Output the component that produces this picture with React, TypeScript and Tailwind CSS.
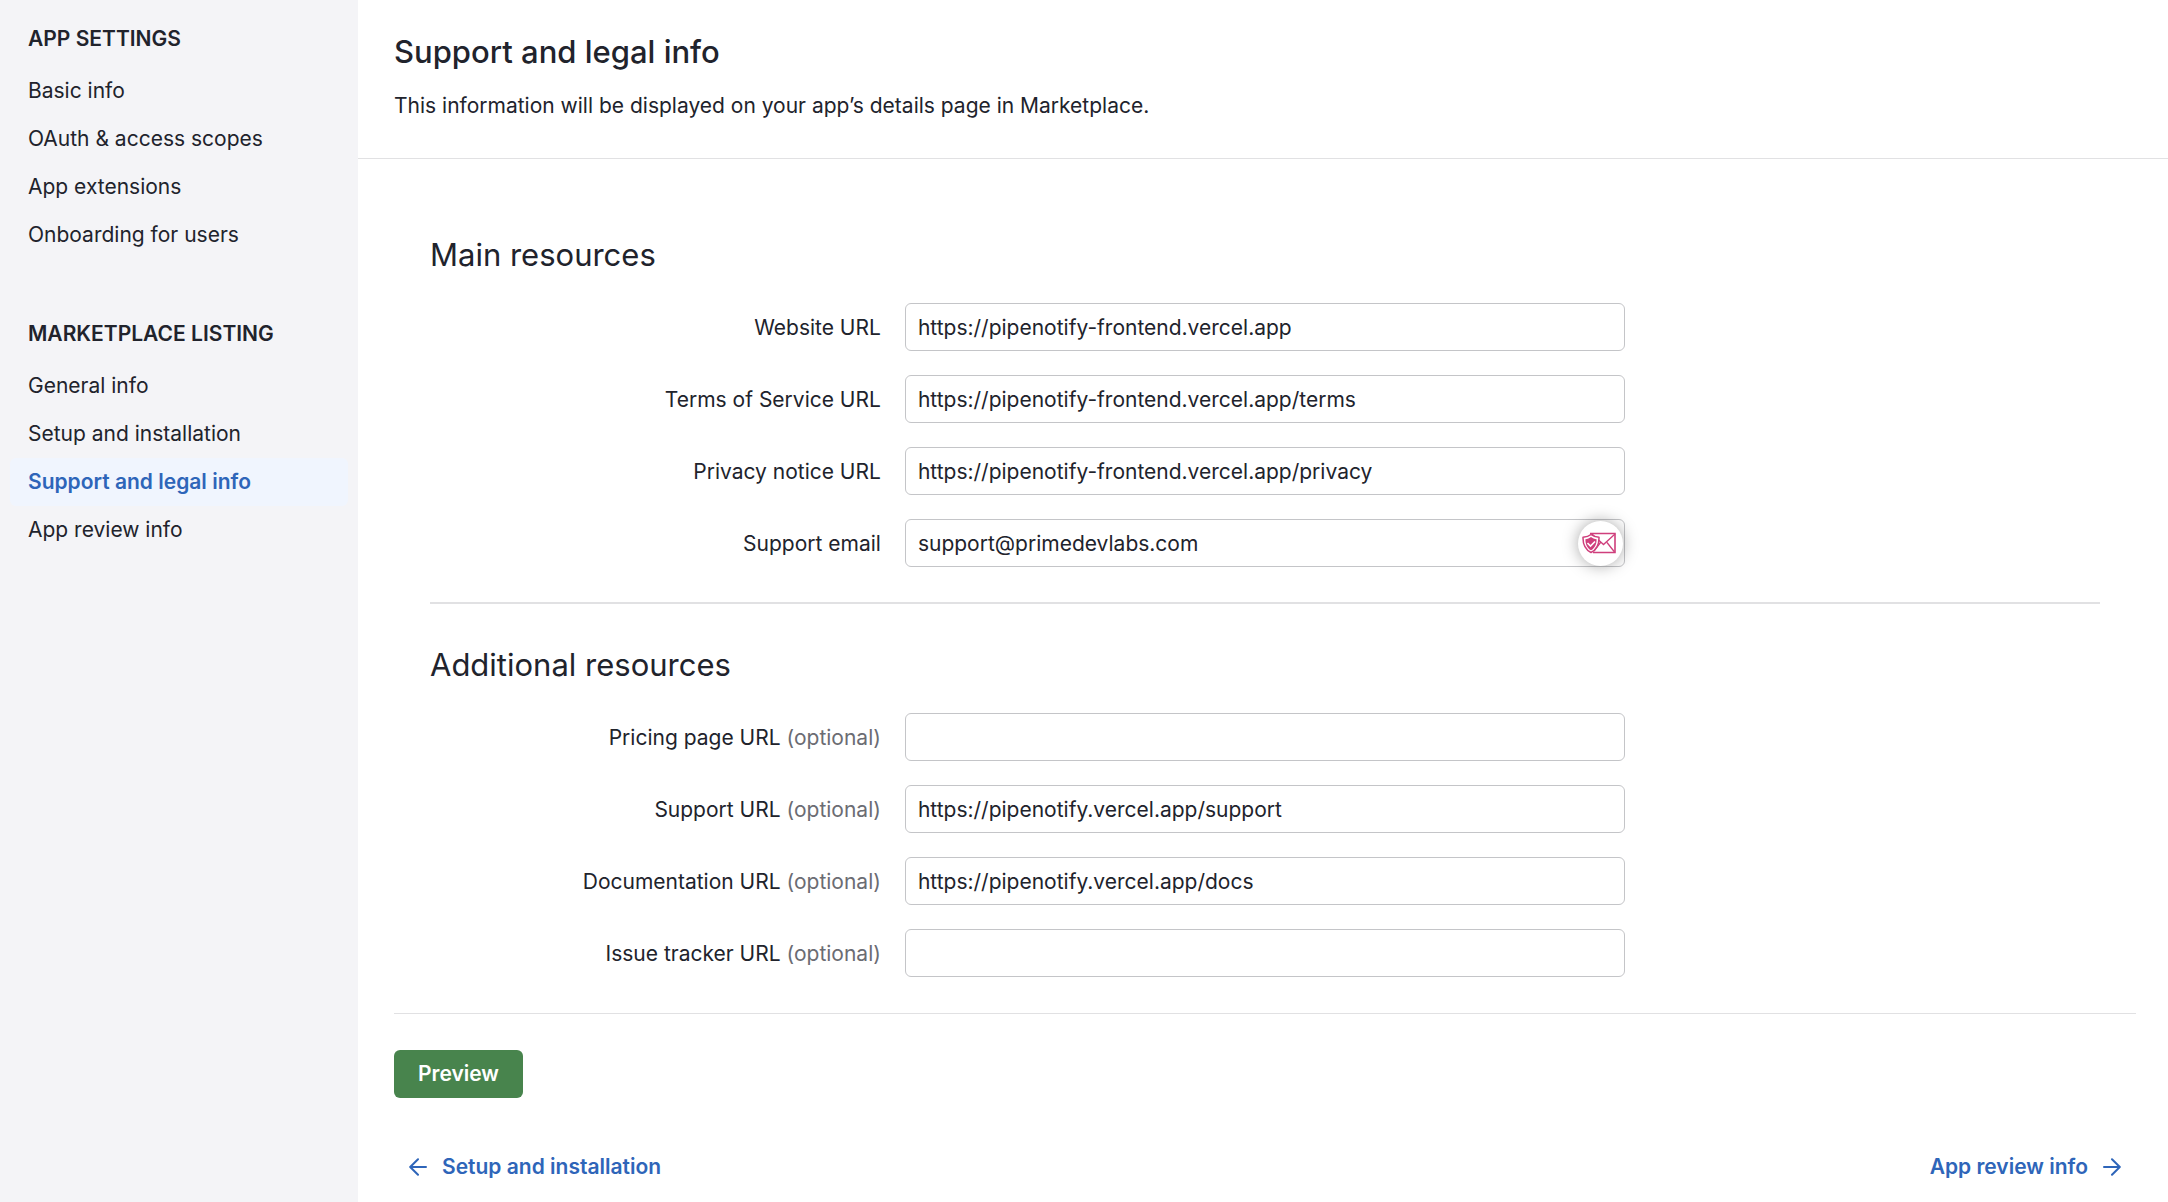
import { useId } from "react";

type NavItem = { label: string; active?: boolean };
type FieldData = { label: string; value: string; optional?: boolean; type?: string; badge?: boolean };

const appSettings: NavItem[] = [
  { label: "Basic info" },
  { label: "OAuth & access scopes" },
  { label: "App extensions" },
  { label: "Onboarding for users" },
];

const marketplaceListing: NavItem[] = [
  { label: "General info" },
  { label: "Setup and installation" },
  { label: "Support and legal info", active: true },
  { label: "App review info" },
];

const mainResources: FieldData[] = [
  { label: "Website URL", value: "https://pipenotify-frontend.vercel.app" },
  { label: "Terms of Service URL", value: "https://pipenotify-frontend.vercel.app/terms" },
  { label: "Privacy notice URL", value: "https://pipenotify-frontend.vercel.app/privacy" },
  { label: "Support email", value: "support@primedevlabs.com", type: "email", badge: true },
];

const additionalResources: FieldData[] = [
  { label: "Pricing page URL", value: "", optional: true },
  { label: "Support URL", value: "https://pipenotify.vercel.app/support", optional: true },
  { label: "Documentation URL", value: "https://pipenotify.vercel.app/docs", optional: true },
  { label: "Issue tracker URL", value: "", optional: true },
];

function NavGroup({ title, items }: { title: string; items: NavItem[] }) {
  return (
    <section>
      <h2 className="px-[18px] pb-1 font-semibold leading-12">{title}</h2>
      <ul>
        {items.map((item) => (
          <li key={item.label}>
            <a
              href="#"
              aria-current={item.active ? "page" : undefined}
              className={
                item.active
                  ? "block rounded-md bg-[#f0f5fe] px-[18px] font-semibold leading-12 text-[#2e65b9]"
                  : "block rounded-md px-[18px] leading-12"
              }
            >
              {item.label}
            </a>
          </li>
        ))}
      </ul>
    </section>
  );
}

function MailShieldIcon() {
  return (
    <svg viewBox="0 0 34 22" className="h-[22px] w-[34px]" fill="none" aria-hidden="true">
      <path d="M8 1.500H33V20.500H11" stroke="#cf3f7c" strokeWidth="1.600" />
      <path d="M10 2L21.500 12.500L33 2M25 10.500L32.500 20M18.500 10.500L12 19" stroke="#cf3f7c" strokeWidth="1.300" />
      <path
        d="M9 2.500C7 4.200 4 5 1 5.200C.8 12 3 17.500 9 20.500C15 17.500 17.200 12 17 5.200C14 5 11 4.200 9 2.500Z"
        fill="#fff"
        stroke="#cf3f7c"
        strokeWidth="1.500"
        strokeLinejoin="round"
      />
      <path d="M9 5C7.500 6.300 5.500 7 3.400 7.200C3.400 12 5 16 9 18.300C13 16 14.600 12 14.600 7.200C12.500 7 10.500 6.300 9 5Z" fill="#cf3f7c" />
      <path d="M5.500 11L8.500 14L13 9.500" stroke="#fff" strokeWidth="1.600" />
    </svg>
  );
}

function ArrowIcon({ left }: { left?: boolean }) {
  return (
    <svg
      viewBox="0 0 18 18"
      className="size-[18px]"
      fill="none"
      stroke="currentColor"
      strokeWidth="2"
      strokeLinecap="round"
      strokeLinejoin="round"
      aria-hidden="true"
    >
      <path d={left ? "M17 9H1.500M9 1.200L1.200 9L9 16.800" : "M1 9H16.500M9 1.200L16.800 9L9 16.800"} />
    </svg>
  );
}

function Field({ label, value, optional, type = "text", badge }: FieldData) {
  const id = useId();
  return (
    <div className="grid grid-cols-[27%_minmax(0,720px)] items-center gap-x-6">
      <label htmlFor={id} className="pt-0.5 text-right">
        {label}
        {optional && <span className="text-[#6b6c73]"> (optional)</span>}
      </label>
      <div className="relative">
        <input
          id={id}
          type={type}
          defaultValue={value}
          className="block h-12 w-full rounded-md border border-[#c4c5c8] bg-white px-3 outline-none focus:border-[#2e65b9]"
        />
        {badge && (
          <button
            type="button"
            aria-label="Email protection"
            className="absolute right-[2px] top-[2px] flex size-[45px] items-center justify-center rounded-full bg-white pb-px pr-0.5 shadow-[0_0_16px_rgba(0,0,0,0.35)]"
          >
            <MailShieldIcon />
          </button>
        )}
      </div>
    </div>
  );
}

function FieldGroup({ title, fields }: { title: string; fields: FieldData[] }) {
  return (
    <section>
      <h2 className="text-[31px] leading-10">{title}</h2>
      <div className="mt-7 flex flex-col gap-6">
        {fields.map((field) => (
          <Field key={field.label} {...field} />
        ))}
      </div>
    </section>
  );
}

export default function App() {
  return (
    <div className="flex min-h-screen bg-white font-['Inter',sans-serif] text-[21px] leading-8 text-[#21232c]">
      <nav aria-label="App" className="flex w-[358px] shrink-0 flex-col gap-[51px] bg-[#f4f4f7] px-[10px] pt-[15px]">
        <NavGroup title="APP SETTINGS" items={appSettings} />
        <NavGroup title="MARKETPLACE LISTING" items={marketplaceListing} />
      </nav>

      <main className="min-w-0 flex-1">
        <header className="border-b border-[#e1e1e3] px-9 pb-9 pt-8">
          <h1 className="text-[31px] font-medium leading-10">Support and legal info</h1>
          <p className="mt-[18px]">This information will be displayed on your app’s details page in Marketplace.</p>
        </header>

        <form className="pl-9 pr-8" onSubmit={(event) => event.preventDefault()}>
          <div className="px-9 pb-9 pt-[76px]">
            <FieldGroup title="Main resources" fields={mainResources} />
            <hr className="mb-[41px] mt-[35px] border-t-2 border-[#e1e1e3]" />
            <FieldGroup title="Additional resources" fields={additionalResources} />
          </div>
          <div className="border-t border-[#e1e1e3] pt-9">
            <button type="submit" className="h-12 rounded-md bg-[#48844d] px-6 font-semibold text-white">
              Preview
            </button>
          </div>
        </form>

        <div className="mt-[53px] flex justify-between pb-[19px] pl-[51px] pr-[47px] font-semibold text-[#2e65b9]">
          <a href="#" className="flex items-center gap-[15px]">
            <ArrowIcon left />
            Setup and installation
          </a>
          <a href="#" className="flex items-center gap-[15px]">
            App review info
            <ArrowIcon />
          </a>
        </div>
      </main>
    </div>
  );
}
